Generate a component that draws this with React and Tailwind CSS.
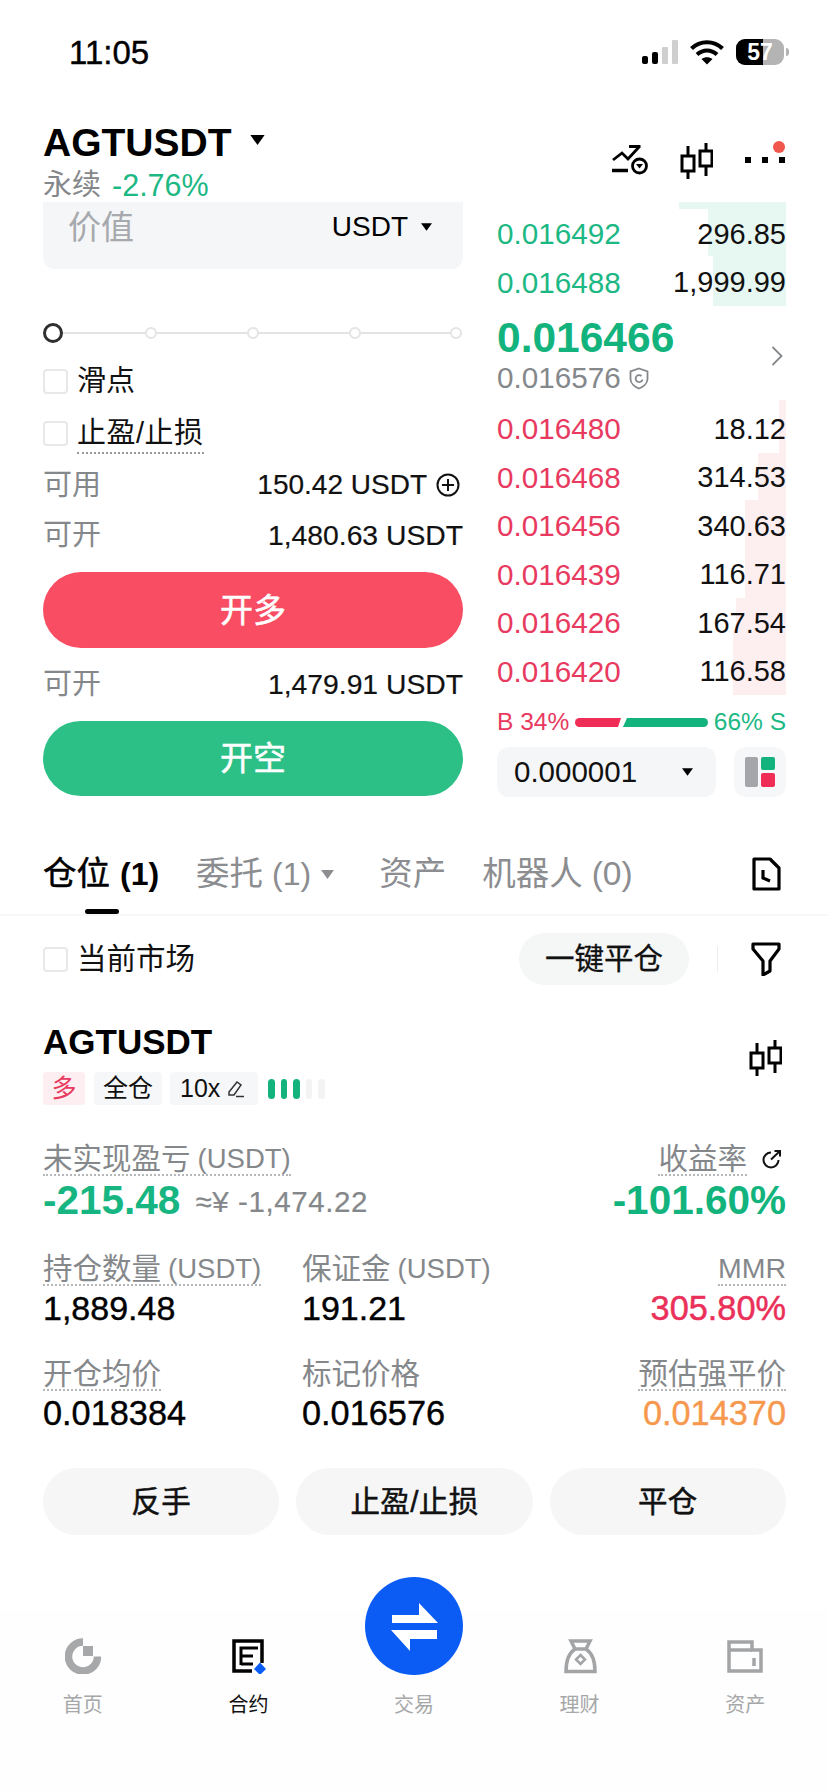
import React from "react";

const Tri = ({ w, h, c = "#000", className = "" }) => (
  <svg width={w} height={h} viewBox="0 0 10 7" className={className}>
    <polygon points="0,0 10,0 5,7" fill={c} />
  </svg>
);

const Candles = ({ className = "" }) => (
  <svg width="33" height="36" viewBox="0 0 33 36" className={className} fill="none" stroke="#000" strokeWidth="3">
    <path d="M8 3v33M26 0v33" />
    <rect x="2" y="13" width="12" height="15" fill="#fff" />
    <rect x="20" y="8" width="12" height="15" fill="#fff" />
  </svg>
);

const Box = () => <span className="block w-[25px] h-[25px] rounded-[4px] border-2 border-[#e8e8e8] bg-white shrink-0" />;

const Dotted = ({ children, className = "" }) => (
  <span className={`inline-flex items-center h-[35px] pt-[2px] text-[#85888b] text-[29.5px] leading-none border-b-2 border-dotted border-[#b5b7b9] whitespace-nowrap ${className}`}>
    {children}
  </span>
);

const asks = [["0.016492", "296.85"], ["0.016488", "1,999.99"]];
const bids = [
  ["0.016480", "18.12"],
  ["0.016468", "314.53"],
  ["0.016456", "340.63"],
  ["0.016439", "116.71"],
  ["0.016426", "167.54"],
  ["0.016420", "116.58"],
];
const askDepth = [[7, 107], [47, 78], [50, 73]];
const bidDepth = [[53, 7], [47, 28], [98, 41], [32, 50], [65, 53]];

const Depth = ({ data, color }) => (
  <div className="absolute right-0 top-0 flex flex-col items-end">
    {data.map(([h, w], i) => (
      <div key={i} className={color} style={{ height: h, width: w }} />
    ))}
  </div>
);

const Book = ({ rows, color }) =>
  rows.map(([p, q]) => (
    <div key={p} className="relative flex justify-between items-center h-[48.5px] leading-none">
      <span className={`text-[29.7px] ${color}`}>{p}</span>
      <span className="text-[29px] text-[#111]">{q}</span>
    </div>
  ));

const navItems = [
  {
    label: "首页",
    icon: (
      <svg width="36" height="36" viewBox="0 0 36 36" fill="none">
        <path d="M18 4A14.5 14.5 0 1 0 32.500 18.500" stroke="#a7a8aa" strokeWidth="7.500" />
        <rect x="18" y="8" width="10" height="10" fill="#a7a8aa" />
      </svg>
    ),
  },
  {
    label: "合约",
    active: true,
    icon: (
      <svg width="36" height="36" viewBox="0 0 36 36" fill="none">
        <path d="M22 33H4V3H32V25" stroke="#000" strokeWidth="3.500" />
        <path d="M11 27V10H28M11 18H23M11 26H23" stroke="#000" strokeWidth="3" />
        <polygon points="30,24.500 36,31 30,37 24,31" fill="#0a5cf5" />
      </svg>
    ),
  },
  { label: "交易", icon: <div className="h-[36px]" /> },
  {
    label: "理财",
    icon: (
      <svg width="36" height="36" viewBox="0 0 36 36" fill="none" stroke="#a3a4a6" strokeWidth="3.500">
        <path d="M9 3H28L24 11H13Z" />
        <path d="M13 11C7 15 4 22 4 33.500H33C33 22 30 15 24 11" />
        <polygon points="18.500,17 23,21.500 18.500,26 14,21.500" strokeWidth="2.500" />
      </svg>
    ),
  },
  {
    label: "资产",
    icon: (
      <svg width="38" height="36" viewBox="0 0 38 36" fill="none" stroke="#a3a4a6" strokeWidth="3.500">
        <path d="M3 4H26V12H35V33H3Z" />
        <path d="M3 12H26" />
        <path d="M28 20V28" strokeWidth="3.500" />
      </svg>
    ),
  },
];

export default function App() {
  return (
    <div className="relative w-[828px] h-[1792px] overflow-hidden bg-white text-black [font-family:'Liberation_Sans','Noto_Sans_CJK_SC',sans-serif]">
      {/* status bar */}
      <div className="flex justify-between items-center h-[104px] pl-[69px] pr-[39px]">
        <span className="text-[33px] leading-none [-webkit-text-stroke:0.4px_#000]">11:05</span>
        <div className="flex items-center">
          <svg width="36" height="24" viewBox="0 0 36 24">
            <rect x="0" y="16" width="6" height="8" rx="2" fill="#000" />
            <rect x="10" y="12" width="6" height="12" rx="2" fill="#000" />
            <rect x="20" y="7" width="6" height="17" rx="1" fill="#cfcfcf" />
            <rect x="30" y="0" width="6" height="24" rx="1" fill="#cfcfcf" />
          </svg>
          <svg width="34" height="26" viewBox="0 0 34 26" className="ml-[12px]" fill="none" stroke="#000" strokeWidth="4">
            <path d="M1.500 9.500C10 1 24 1 32.500 9.500" />
            <path d="M7 15.500C13 10 21 10 27 15.500" />
            <path d="M11.500 20C15 17.500 19 17.500 22.500 20L17 25.500Z" fill="#000" strokeWidth="0" />
          </svg>
          <div className="relative ml-[12px] w-[48px] h-[26px] rounded-[9px] overflow-hidden bg-[#b4b4b4]">
            <div className="absolute left-0 top-0 h-full w-[27px] bg-black" />
            <span className="absolute inset-0 flex items-center justify-center text-white text-[23px] font-bold leading-none">57</span>
          </div>
          <span className="ml-[2px] block w-[3px] h-[8px] rounded-r-full bg-[#b4b4b4]" />
        </div>
      </div>

      {/* header */}
      <div className="flex justify-between h-[98px] pl-[43px] pr-[43px]">
        <div>
          <div className="flex items-center h-[40px] mt-[18px]">
            <span className="text-[39px] font-bold leading-none">AGTUSDT</span>
            <Tri w={15} h={10} className="ml-[18px] mt-[-4px]" />
          </div>
          <div className="flex items-center h-[34px] mt-[6px] leading-none">
            <span className="text-[#85888b] text-[29px]">永续</span>
            <span className="ml-[11px] text-[#1cb884] text-[30.5px]">-2.76%</span>
          </div>
        </div>
        <div className="flex items-start gap-[32px] pt-[38px]">
          <svg width="37" height="30" viewBox="0 0 37 30" fill="none" stroke="#000" strokeWidth="2.800" className="mt-[3px]">
            <path d="M2 15L11 8L17 14L28 2M18 1.500H29.500" />
            <path d="M1 25.500H17" strokeWidth="3.500" />
            <circle cx="28.500" cy="21" r="7" />
            <polygon points="25,19 32,19 28.500,23.500" fill="#000" strokeWidth="0" />
          </svg>
          <Candles className="mt-[1px]" />
          <div className="relative flex items-center gap-[11px] h-[5px] mt-[15px]">
            <span className="block w-[6px] h-[6px] bg-black" />
            <span className="block w-[6px] h-[6px] bg-black" />
            <span className="block w-[6px] h-[6px] bg-black" />
            <span className="absolute right-[0px] top-[-16px] w-[12px] h-[12px] rounded-full bg-[#f2574d]" />
          </div>
        </div>
      </div>

      {/* trade panel */}
      <div className="flex pl-[43px] pr-[42px]">
        <div className="w-[420px]">
          <div className="flex justify-between h-[67px] rounded-b-[12px] bg-[#f5f6f7] pl-[25px] pr-[31px] pt-[6px]">
            <span className="text-[33px] leading-[40px] text-[#a6a9ad]">价值</span>
            <span className="flex items-center h-[38px] text-[28px] leading-none">
              USDT
              <Tri w={11} h={8} className="ml-[13px]" />
            </span>
          </div>

          <div className="relative flex items-center h-[20px] mt-[54px]">
            <div className="absolute left-[10px] right-[2px] top-[9px] h-[2px] bg-[#e4e4e4]" />
            <span className="relative block w-[20px] h-[20px] rounded-full border-[3px] border-[#2f2f2f] bg-white" />
            {[82, 90, 90, 89].map((m, i) => (
              <span key={i} className="relative block w-[12px] h-[12px] rounded-full border-2 border-[#e4e4e4] bg-white" style={{ marginLeft: m }} />
            ))}
          </div>

          <div className="flex items-center gap-[9px] h-[52px] mt-[12px] text-[29px] leading-none text-[#111]">
            <Box />
            <span>滑点</span>
          </div>
          <div className="flex items-center gap-[9px] h-[52px] text-[29px] leading-none text-[#111]">
            <Box />
            <span className="inline-flex items-center h-[38px] mt-[3px] tracking-[0.5px] border-b-2 border-dotted border-[#9a9a9a]">止盈/止损</span>
          </div>
          <div className="flex justify-between items-center h-[52px] leading-none">
            <span className="text-[#85888b] text-[29px]">可用</span>
            <span className="flex items-center text-[28px] text-[#111] [-webkit-text-stroke:0.2px_#111]">
              150.42 USDT
              <svg width="24" height="24" viewBox="0 0 24 24" fill="none" stroke="#111" strokeWidth="2" className="ml-[9px] mr-[3px]">
                <circle cx="12" cy="12" r="10.500" />
                <path d="M6 12H18M12 6V18" />
              </svg>
            </span>
          </div>
          <div className="flex justify-between items-center h-[48px] leading-none">
            <span className="text-[#85888b] text-[29px]">可开</span>
            <span className="text-[#111] text-[28.3px] [-webkit-text-stroke:0.2px_#111]">1,480.63 USDT</span>
          </div>
          <button className="flex items-center justify-center w-full h-[76px] mt-[13px] rounded-full bg-[#f94d63] text-white text-[33px] leading-none [-webkit-text-stroke:0.5px_#fff]">开多</button>
          <div className="flex justify-between items-center h-[48px] mt-[12px] leading-none">
            <span className="text-[#85888b] text-[29px]">可开</span>
            <span className="text-[#111] text-[28.3px] [-webkit-text-stroke:0.2px_#111]">1,479.91 USDT</span>
          </div>
          <button className="flex items-center justify-center w-full h-[75px] mt-[13px] rounded-full bg-[#2cc087] text-white text-[33px] leading-none [-webkit-text-stroke:0.5px_#fff]">开空</button>
        </div>

        <div className="w-[289px] ml-[34px]">
          <div className="relative h-[105px] pt-[8px]">
            <Depth data={askDepth} color="bg-[#e7f8f2]" />
            <Book rows={asks} color="text-[#1cb884]" />
          </div>
          <div className="flex justify-between items-center h-[93px] pt-[5px]">
            <div>
              <div className="h-[44px] text-[42.5px] font-bold leading-[44px] text-[#12b37c]">0.016466</div>
              <div className="flex items-center h-[36px] text-[29.7px] leading-none text-[#85888b]">
                0.016576
                <svg width="20" height="23" viewBox="0 0 20 23" fill="none" stroke="#85888b" strokeWidth="1.800" className="ml-[8px]">
                  <path d="M10 1.500L18.500 4.500V12C18.500 16.500 14 20 10 21.500C6 20 1.500 16.500 1.500 12V4.500Z" />
                  <path d="M12.500 9A3.500 3.500 0 1 0 13.500 12.500" />
                </svg>
              </div>
            </div>
            <svg width="12" height="20" viewBox="0 0 12 20" fill="none" stroke="#85888b" strokeWidth="1.800" className="mr-[3px]">
              <path d="M1.500 1L10.500 10L1.500 19" />
            </svg>
          </div>
          <div className="relative pt-[5px]">
            <Depth data={bidDepth} color="bg-[#fdeef0]" />
            <Book rows={bids} color="text-[#e8395f]" />
          </div>
          <div className="flex justify-between items-center h-[24px] mt-[14px] text-[24.5px] leading-none">
            <span className="text-[#e8395f]">B 34%</span>
            <svg width="133" height="9" viewBox="0 0 133 9">
              <path d="M4.500 0H46L43 9H4.500A4.500 4.500 0 0 1 4.500 0Z" fill="#f02d56" />
              <path d="M52 0H128.500A4.500 4.500 0 0 1 128.500 9H48Z" fill="#12b37c" />
            </svg>
            <span className="text-[#1cb884]">66% S</span>
          </div>
          <div className="flex justify-between mt-[13px]">
            <div className="flex justify-between items-center w-[219px] h-[50px] rounded-[12px] bg-[#f5f6f7] pl-[17px] pr-[23px] text-[29.5px] leading-none text-[#111]">
              0.000001
              <Tri w={11} h={8} />
            </div>
            <div className="flex items-center justify-center w-[52px] h-[50px] rounded-[12px] bg-[#f6f7f8]">
              <svg width="30" height="30" viewBox="0 0 30 30">
                <rect x="0" y="0" width="13" height="30" rx="2" fill="#a4a6a9" />
                <rect x="16" y="0" width="14" height="13" rx="2" fill="#12b37c" />
                <rect x="16" y="16" width="14" height="14" rx="2" fill="#f02d56" />
              </svg>
            </div>
          </div>
        </div>
      </div>

      {/* tabs */}
      <div className="relative h-[72px] mt-[47px] border-b-2 border-[#f7f7f7] pl-[43px] pr-[47px]">
        <div className="flex items-center justify-between h-[60px]">
          <div className="flex items-center text-[33.5px] leading-none text-[#8b8d90]">
            <span className="text-black [-webkit-text-stroke:0.5px_#000]">仓位</span>
            <span className="text-black font-bold ml-[10px] text-[32px]">(1)</span>
            <span className="ml-[37px]">委托</span>
            <span className="ml-[9px] text-[32px]">(1)</span>
            <Tri w={13} h={9} c="#8b8d90" className="ml-[10px]" />
            <span className="ml-[45px]">资产</span>
            <span className="ml-[36px]">机器人</span>
            <span className="ml-[9px]">(0)</span>
          </div>
          <svg width="30" height="34" viewBox="0 0 30 34" fill="none" stroke="#000" strokeWidth="3.200">
            <path d="M3 2H19L28 11V32H3Z" strokeLinejoin="round" />
            <path d="M12 13V21L19 24" />
          </svg>
        </div>
        <span className="absolute left-[85px] bottom-[0px] w-[34px] h-[5px] rounded-full bg-black" />
      </div>

      {/* filter row */}
      <div className="flex items-center h-[86px] pl-[43px] pr-[47px] text-[29.5px] leading-none">
        <Box />
        <span className="ml-[9px] text-[#111]">当前市场</span>
        <span className="flex items-center justify-center ml-auto w-[170px] h-[52px] rounded-full bg-[#f5f6f6] text-[#111] [-webkit-text-stroke:0.3px_#111]">一键平仓</span>
        <span className="block ml-[28px] w-[1px] h-[26px] bg-[#eeeeee]" />
        <svg width="30" height="34" viewBox="0 0 30 34" fill="none" stroke="#000" strokeWidth="3.200" strokeLinejoin="round" className="ml-[33px]">
          <path d="M2 2H28V7L19 19V29L12 33V19L2 7Z" />
        </svg>
      </div>

      {/* position */}
      <div className="px-[43px] pr-[42px]">
        <div className="flex justify-between mt-[18px]">
          <div>
            <div className="h-[44px] text-[35px] font-bold leading-[44px]">AGTUSDT</div>
            <div className="flex items-center h-[33px] mt-[8px] text-[25px] leading-none">
              <span className="flex items-center justify-center w-[42px] h-[33px] rounded-[4px] bg-[#fdeef1] text-[#e8395f]">多</span>
              <span className="flex items-center justify-center ml-[9px] w-[68px] h-[33px] rounded-[4px] bg-[#f6f7f8] text-[#111]">全仓</span>
              <span className="flex items-center ml-[8px] pl-[10px] w-[88px] h-[33px] rounded-[4px] bg-[#f6f7f8] text-[#111]">
                10x
                <svg width="18" height="18" viewBox="0 0 18 18" fill="none" stroke="#333" strokeWidth="1.500" className="ml-[7px]">
                  <path d="M2 12L10 2L14 5L7 15H2Z" />
                  <path d="M9 16.500H17" />
                </svg>
              </span>
              <span className="flex items-center gap-[6px] ml-[10px]">
                <span className="block w-[6.500px] h-[20px] rounded-full bg-[#12b37c]" />
                <span className="block w-[6.500px] h-[20px] rounded-full bg-[#12b37c]" />
                <span className="block w-[6.500px] h-[20px] rounded-full bg-[#12b37c]" />
                <span className="block w-[6.500px] h-[20px] rounded-full bg-[#f3f3f3]" />
                <span className="block w-[6.500px] h-[20px] rounded-full bg-[#f3f3f3]" />
              </span>
            </div>
          </div>
          <Candles className="mt-[20px] mr-[4px]" />
        </div>

        <div className="flex justify-between mt-[36px]">
          <div>
            <Dotted>
              未实现盈亏<span className="ml-[7px] text-[27.5px]">(USDT)</span>
            </Dotted>
            <div className="flex items-center h-[48px] leading-none">
              <span className="text-[40.5px] font-bold text-[#17b581]">-215.48</span>
              <span className="ml-[15px] mt-[4px] text-[29.5px] tracking-[0.6px] text-[#85888b] [-webkit-text-stroke:0.2px_#85888b]">≈¥ -1,474.22</span>
            </div>
          </div>
          <div className="flex flex-col items-end">
            <div className="flex items-center h-[35px]">
              <Dotted>收益率</Dotted>
              <svg width="20" height="20" viewBox="0 0 20 20" fill="none" stroke="#111" strokeWidth="2" className="ml-[15px] mr-[4px]">
                <path d="M9 3.500A7.500 7.500 0 1 0 16.500 11" />
                <path d="M9 10.500L18 2M12.500 2H18V7.500" />
              </svg>
            </div>
            <div className="flex items-center h-[48px] text-[40.5px] font-bold leading-none text-[#12b37c]">-101.60%</div>
          </div>
        </div>

        <div className="flex mt-[27px]">
          <div className="w-[259px]">
            <Dotted>
              持仓数量<span className="ml-[7px] text-[27.5px]">(USDT)</span>
            </Dotted>
            <div className="flex items-center h-[44px] text-[34px] leading-none [-webkit-text-stroke:0.4px_#000]">1,889.48</div>
          </div>
          <div>
            <Dotted className="border-transparent">
              保证金<span className="ml-[7px] text-[27.5px]">(USDT)</span>
            </Dotted>
            <div className="flex items-center h-[44px] text-[34px] leading-none [-webkit-text-stroke:0.4px_#000]">191.21</div>
          </div>
          <div className="flex flex-col items-end ml-auto">
            <Dotted><span className="text-[28.5px]">MMR</span></Dotted>
            <div className="flex items-center h-[44px] text-[34.3px] leading-none text-[#ea3059] [-webkit-text-stroke:0.5px_#ea3059]">305.80%</div>
          </div>
        </div>

        <div className="flex mt-[26px]">
          <div className="w-[259px]">
            <Dotted>开仓均价</Dotted>
            <div className="flex items-center h-[44px] text-[34.3px] leading-none [-webkit-text-stroke:0.4px_#000]">0.018384</div>
          </div>
          <div>
            <Dotted className="border-transparent">标记价格</Dotted>
            <div className="flex items-center h-[44px] text-[34.3px] leading-none [-webkit-text-stroke:0.4px_#000]">0.016576</div>
          </div>
          <div className="flex flex-col items-end ml-auto">
            <Dotted>预估强平价</Dotted>
            <div className="flex items-center h-[44px] text-[34.3px] leading-none text-[#f6984e] [-webkit-text-stroke:0.4px_#f6984e]">0.014370</div>
          </div>
        </div>

        <div className="grid grid-cols-3 gap-[17px] mt-[33px]">
          {["反手", "止盈/止损", "平仓"].map((t) => (
            <button key={t} className="flex items-center justify-center h-[67px] rounded-full bg-[#f6f6f7] text-[29.5px] tracking-[0.4px] leading-none text-[#111] [-webkit-text-stroke:0.5px_#111]">
              {t}
            </button>
          ))}
        </div>
      </div>

      {/* bottom nav */}
      <div className="relative grid grid-cols-5 h-[182px] mt-[75px] bg-[#fefefe] pt-[28px]">
        {navItems.map((n) => (
          <div key={n.label} className="flex flex-col items-center">
            {n.icon}
            <span className={`block h-[28px] mt-[17px] text-[20px] leading-[28px] ${n.active ? "text-[#111]" : "text-[#a6a7a9]"}`}>{n.label}</span>
          </div>
        ))}
        <div className="absolute left-[365px] top-[-33px] w-[98px] h-[98px] rounded-full bg-[#0a5cf5]">
          <svg width="98" height="98" viewBox="0 0 98 98">
            <polygon points="27,38 54,38 54,26 73,46 27,46" fill="#fff" />
            <polygon points="72,53 26,53 45,74 45,62 72,62" fill="#fff" />
          </svg>
        </div>
      </div>
    </div>
  );
}
